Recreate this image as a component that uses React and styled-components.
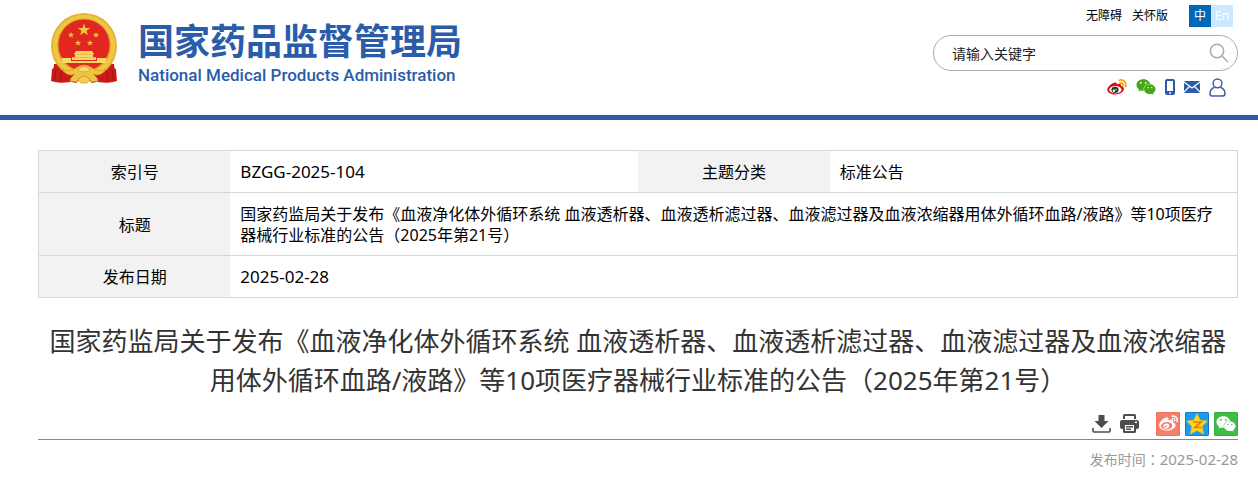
import React from "react";
import styled, { createGlobalStyle } from "styled-components";
import { FaWeixin, FaWeibo } from "react-icons/fa";

const GlobalStyle = createGlobalStyle`
  * {
    box-sizing: border-box;
  }
  body {
    margin: 0;
    background: #fff;
    color: #000;
    font-family: "Noto Sans", "Noto Sans CJK SC", sans-serif;
    font-size: 16px;
  }
`;

const Header = styled.header`
  border-bottom: 5px solid #2a5caa;
`;

const Container = styled.div`
  max-width: 1258px;
  margin: 0 auto;
  padding: 0 20px 0 38px;
`;

const HeaderInner = styled(Container)`
  display: flex;
  justify-content: space-between;
  height: 115px;
`;

const Logo = styled.a`
  display: flex;
  gap: 19px;
  padding: 12px 0 0 12px;
  color: #2a5caa;
  text-decoration: none;
`;

const LogoText = styled.div`
  display: flex;
  flex-direction: column;
  white-space: nowrap;
`;

const LogoName = styled.span`
  font-family: "Noto Sans CJK SC", sans-serif;
  font-size: 36px;
  line-height: 54px;
  font-weight: 700;
`;

const LogoSub = styled.span`
  font-family: Roboto, sans-serif;
  font-size: 17px;
  line-height: 18px;
  font-weight: 500;
`;

const HeaderSide = styled.div`
  width: 305px;
  padding-top: 5px;
`;

const TopLinks = styled.nav`
  display: flex;
  justify-content: flex-end;
  align-items: center;
  gap: 10px;
  height: 22px;
  padding-right: 5px;
`;

const TopLink = styled.a`
  color: #000;
  font-size: 12px;
  line-height: 22px;
  text-decoration: none;
`;

const Langs = styled.div`
  display: flex;
  margin-left: 11px;
`;

const Lang = styled.a`
  width: 22px;
  height: 22px;
  background: ${({ $active }) => ($active ? "#0068b7" : "#cce8ff")};
  color: #fff;
  font-size: 12px;
  line-height: 22px;
  text-align: center;
  text-decoration: none;
`;

const Search = styled.form`
  display: flex;
  align-items: center;
  height: 36px;
  margin-top: 8px;
  padding: 0 8px 0 18px;
  border: 1px solid #aaa;
  border-radius: 18px;
`;

const SearchInput = styled.input`
  flex: 1;
  min-width: 0;
  padding: 0;
  border: 0;
  outline: 0;
  background: none;
  font-family: inherit;
  font-size: 14px;
  &::placeholder {
    color: #222;
    opacity: 1;
  }
`;

const IconButton = styled.button`
  display: flex;
  padding: 0;
  border: 0;
  background: none;
  cursor: pointer;
`;

const Socials = styled.div`
  display: flex;
  justify-content: flex-end;
  align-items: center;
  gap: 9px;
  height: 20px;
  margin-top: 6px;
  padding-right: 12px;
`;

const IconLink = styled.a`
  display: flex;
  color: ${({ $color }) => $color || "#2a5caa"};
`;

const InfoTable = styled.table`
  width: 100%;
  margin-top: 30px;
  table-layout: fixed;
  border-collapse: collapse;
  border: 1px solid #d7d7d7;
  line-height: 21px;
  tr {
    border-bottom: 1px solid #d7d7d7;
  }
`;

const Label = styled.th`
  padding: 11px 10px 9px;
  background: #f2f2f2;
  font-weight: 400;
`;

const Value = styled.td`
  padding: 11px 10px 9px;
`;

/* full-width marks centred in their square */
const Mark = styled.span`
  font-family: "Noto Sans CJK TC", sans-serif;
  line-height: 1;
`;

const Code = styled.span`
  font-size: ${({ $small }) => ($small ? "15px" : "17px")};
  line-height: 1;
`;

const Title = styled.h1`
  margin: 24px 0 0;
  color: #333;
  font-size: 26px;
  line-height: 39px;
  font-weight: 400;
  text-align: center;
`;

const Tools = styled.div`
  display: flex;
  justify-content: flex-end;
  align-items: center;
  gap: 9px;
  height: 40px;
  padding-top: 8px;
  border-bottom: 1px solid #888;
`;

const Shares = styled.div`
  display: flex;
  gap: 5px;
  margin-left: 8px;
`;

const Share = styled.button`
  display: flex;
  align-items: center;
  justify-content: center;
  width: 24px;
  height: 24px;
  padding: 0;
  border: 0;
  border-radius: 2px;
  background: ${({ $bg }) => $bg};
  box-shadow: inset 0 0 0 1px ${({ $edge }) => $edge};
  color: #fff;
  cursor: pointer;
`;

const PubTime = styled.p`
  margin: 9px 0 0;
  color: #999;
  font-size: 14px;
  line-height: 21px;
  text-align: right;
`;

const starPoints = (cx, cy, r) =>
  Array.from({ length: 10 }, (_, i) => {
    const len = i % 2 ? r * 0.4 : r;
    const a = (Math.PI / 5) * i - Math.PI / 2;
    return `${cx + len * Math.cos(a)},${cy + len * Math.sin(a)}`;
  }).join(" ");

const Emblem = () => (
  <svg width="69" height="72" viewBox="0 0 69 72" aria-hidden="true">
    <path d="M4 52 L2 68 Q9 72 17 69 L26 71 L34 64 L42 71 L51 69 Q60 72 66 68 L64 52z" fill="#cb1a1b" />
    <circle cx="34" cy="34" r="33" fill="#e5b432" />
    <circle cx="34" cy="34" r="29" fill="none" stroke="#f0c643" strokeWidth="4" />
    <circle cx="34" cy="33" r="26" fill="#e3261f" stroke="#d29a20" />
    <polygon points={starPoints(34, 18, 6.5)} fill="#f2c744" />
    <polygon points={starPoints(21, 23, 3.3)} fill="#f2c744" />
    <polygon points={starPoints(46, 23, 3.3)} fill="#f2c744" />
    <polygon points={starPoints(28, 31, 3.3)} fill="#f2c744" />
    <polygon points={starPoints(40, 31, 3.3)} fill="#f2c744" />
    <path d="M26 39h16l2 3H24z M25 42h18v3H25z M22 45h24v3H22z M12 46h9v3h26v-3h9v5H12z" fill="#f8d866" />
    <path d="M24 42.500h20M22 45.500h24" stroke="#e2a936" strokeWidth=".7" />
    <path d="M2 57 Q8 54 13 60 Q19 65 26 62 L20 70 Q9 72 1 69z M66 57 Q60 54 55 60 Q49 65 42 62 L48 70 Q59 72 67 69z" fill="#cb1a1b" />
    <path d="M6 58 L4 69 M11 61 L10 70 M57 61 L58 70 M62 58 L64 69" stroke="#a50f14" fill="none" />
    <path d="M12 57 Q20 61 26 56 Q34 50 42 56 Q48 61 56 57 Q51 65 43 62 Q48 66 48 69 L41 70 Q40 65 34 64 Q28 65 27 70 L20 69 Q20 66 25 62 Q17 65 12 57 Z" fill="#f0c545" stroke="#cf941f" strokeWidth=".7" />
    <path d="M27 58 Q34 51 41 58 Q34 62 27 58z" fill="#f8dc70" stroke="#cf941f" strokeWidth=".7" />
    <path d="M28 68 Q34 60 40 68 L37 71 H31z" fill="#f3ce4e" stroke="#cf941f" strokeWidth=".7" />
  </svg>
);

const WeiboIcon = () => (
  <svg width="20" height="18" viewBox="0 0 20 18" aria-hidden="true">
    <path d="M8.5 4.4c1.2 0 1.5.8 1.2 2 2-1 4.800-.8 4.200 1.400 1.800.5 3 1.600 3 3 0 3.400-4.200 5.700-8.500 5.700S.3 14.600.3 11.700C.3 8.600 5.200 4.400 8.500 4.400z" fill="#e6060b" />
    <ellipse cx="8.400" cy="11.700" rx="6.100" ry="3.700" fill="#fff" />
    <ellipse cx="8" cy="11.800" rx="3.600" ry="3.100" fill="#333" />
    <circle cx="7" cy="12.700" r="1.300" fill="#fff" />
    <circle cx="9" cy="11.300" r=".6" fill="#fff" />
    <path d="M12.300 2.200c4.300-1.200 7.300 2.300 6.200 6.200M13 5c2-.5 3.400 1 2.900 2.900" fill="none" stroke="#eba512" strokeWidth="1.700" strokeLinecap="round" />
  </svg>
);

const PhoneIcon = () => (
  <svg width="10" height="16" viewBox="0 0 10 16" aria-hidden="true">
    <rect width="10" height="16" rx="2" fill="#2a5caa" />
    <path d="M2 2h6v10H2z" fill="#fff" />
    <circle cx="5" cy="14" r="1" fill="#fff" />
  </svg>
);

const MailIcon = () => (
  <svg width="16" height="12" viewBox="0 0 16 12" aria-hidden="true">
    <rect width="16" height="12" rx="1" fill="#2a5caa" />
    <path d="M0 1l8 6 8-6M0 11l5.500-5.500M16 11l-5.500-5.500" fill="none" stroke="#fff" strokeWidth="1.200" />
  </svg>
);

const UserIcon = () => (
  <svg width="17" height="19" viewBox="0 0 17 19" fill="none" stroke="#3f5fa8" strokeWidth="1.500" aria-hidden="true">
    <circle cx="8.500" cy="5.300" r="4.400" />
    <path d="M5.500 9.200C2.500 10.400 1 12.500 1 15.500c0 1.700.7 2.500 2.200 2.500h10.600c1.500 0 2.200-.8 2.200-2.500 0-3-1.500-5.100-4.500-6.300" />
  </svg>
);

const SearchIcon = () => (
  <svg width="20" height="20" viewBox="0 0 20 20" fill="none" stroke="#aaa" strokeWidth="1.500" aria-hidden="true">
    <circle cx="8" cy="8" r="6.700" />
    <path d="M13 13l6 6" />
  </svg>
);

const DownloadIcon = () => (
  <svg width="19" height="19" viewBox="0 0 19 19" aria-hidden="true">
    <path d="M6.500 1h6v6h4l-7 7-7-7h4z" fill="#4d4d4d" />
    <path d="M1 14v3q0 1 1 1h15q1 0 1-1v-3" fill="none" stroke="#4d4d4d" strokeWidth="1.600" />
  </svg>
);

const PrintIcon = () => (
  <svg width="19" height="19" viewBox="0 0 19 19" fill="#4d4d4d" aria-hidden="true">
    <path d="M3 5V1.500Q3 0 4.500 0h10Q16 0 16 1.500V5h-2V2H5v3z" />
    <path fillRule="evenodd" d="M2 6h15q2 0 2 2v5q0 2-2 2h-1v2.500q0 1.500-1.500 1.500h-10Q3 19 3 17.500V15H2q-2 0-2-2V8q0-2 2-2zm3 5v6h9v-6zm10-3.500v1.500h2V7.500z" />
    <path d="M6 12h7v1.500H6zM6 14.500h5V16H6z" />
  </svg>
);

const StarIcon = () => (
  <svg width="24" height="24" viewBox="0 0 24 24" aria-hidden="true">
    <path d="M12 1.500l3.200 6.700 7.300.9-5.300 5.200L18.600 22 12 18.400 5.400 22l1.400-7.700L1.500 9.100l7.300-.9z" fill="#ffd21c" stroke="#ffc107" strokeWidth=".6" strokeLinejoin="round" />
    <path d="M8 10h8l-6 5.500h6.500" fill="none" stroke="#e87b10" strokeWidth="1.700" />
  </svg>
);

const docTitle =
  "国家药监局关于发布《血液净化体外循环系统 血液透析器、血液透析滤过器、血液滤过器及血液浓缩器用体外循环血路/液路》等10项医疗器械行业标准的公告（2025年第21号）";

const App = () => {
  return (
    <>
      <GlobalStyle />
      <Header>
        <HeaderInner>
          <Logo href="#home">
            <Emblem />
            <LogoText>
              <LogoName>国家药品监督管理局</LogoName>
              <LogoSub>National Medical Products Administration</LogoSub>
            </LogoText>
          </Logo>
          <HeaderSide>
            <TopLinks>
              <TopLink href="#accessible">无障碍</TopLink>
              <TopLink href="#care">关怀版</TopLink>
              <Langs>
                <Lang href="#zh" $active>中</Lang>
                <Lang href="#en">En</Lang>
              </Langs>
            </TopLinks>
            <Search onSubmit={(e) => e.preventDefault()}>
              <SearchInput type="text" aria-label="请输入关键字" placeholder="请输入关键字" />
              <IconButton type="submit" aria-label="搜索"><SearchIcon /></IconButton>
            </Search>
            <Socials>
              <IconLink href="#weibo" aria-label="微博"><WeiboIcon /></IconLink>
              <IconLink href="#weixin" aria-label="微信" $color="#45a715"><FaWeixin size={20} /></IconLink>
              <IconLink href="#mobile" aria-label="手机版"><PhoneIcon /></IconLink>
              <IconLink href="#mail" aria-label="邮箱"><MailIcon /></IconLink>
              <IconLink href="#user" aria-label="个人中心"><UserIcon /></IconLink>
            </Socials>
          </HeaderSide>
        </HeaderInner>
      </Header>

      <Container as="main">
        <InfoTable>
          <colgroup>
            <col width="16%" />
            <col width="34%" />
            <col width="16%" />
            <col width="34%" />
          </colgroup>
          <tbody>
            <tr>
              <Label scope="row">索引号</Label>
              <Value><Code>BZGG-2025-104</Code></Value>
              <Label scope="row">主题分类</Label>
              <Value>标准公告</Value>
            </tr>
            <tr>
              <Label scope="row">标题</Label>
              <Value colSpan={3}>{docTitle}</Value>
            </tr>
            <tr>
              <Label scope="row">发布日期</Label>
              <Value colSpan={3}><Code>2025-02-28</Code></Value>
            </tr>
          </tbody>
        </InfoTable>

        <Title>{docTitle}</Title>

        <Tools>
          <IconButton type="button" aria-label="下载"><DownloadIcon /></IconButton>
          <IconButton type="button" aria-label="打印"><PrintIcon /></IconButton>
          <Shares>
            <Share type="button" aria-label="分享到微博" $bg="#f67d6c" $edge="#f56f5d"><FaWeibo size={19} /></Share>
            <Share type="button" aria-label="分享到QQ空间" $bg="#1a9cf0" $edge="#1579c8"><StarIcon /></Share>
            <Share type="button" aria-label="分享到微信" $bg="#3fbd45" $edge="#31b138"><FaWeixin size={20} /></Share>
          </Shares>
        </Tools>
        <PubTime>发布时间<Mark>：</Mark><Code $small>2025-02-28</Code></PubTime>
      </Container>
    </>
  );
};

export default App;
